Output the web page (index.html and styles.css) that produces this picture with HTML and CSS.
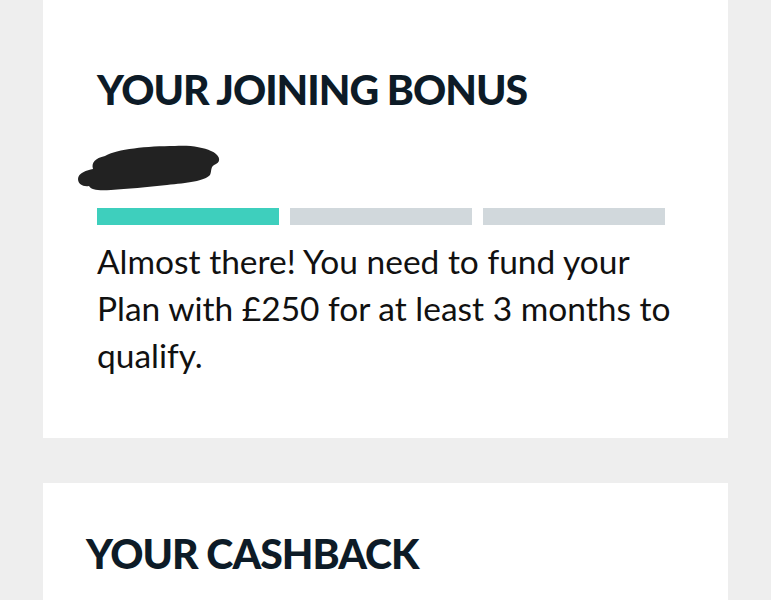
FILE: index.html
```html
<!DOCTYPE html>
<html lang="en">
<head>
<meta charset="utf-8">
<link rel="stylesheet" href="styles.css">
</head>
<body>
<main class="page">
  <section class="card card-bonus">
    <h2 class="card-title">YOUR JOINING BONUS</h2>
    <div class="redacted">
      <svg width="146" height="48" viewBox="0 0 146 48" aria-hidden="true">
        <path d="M28 12 C40 5 70 2 98 2 C112 1 126 3 134 7 C142 10 145 17 139 20 C133 22 135 27 133 31 C128 37 110 39 90 41 C70 43 50 45 34 46 C22 47 14 46 12 42 C6 43 1 40 1 35 C1 29 10 26 16 25 C14 19 18 14 28 12 Z" fill="#222222"/>
      </svg>
    </div>
    <div class="progress">
      <span class="seg seg-done"></span>
      <span class="seg"></span>
      <span class="seg"></span>
    </div>
    <p class="card-text">Almost there! You need to fund your Plan with £250 for at least 3 months to qualify.</p>
  </section>
  <section class="card card-cashback">
    <h2 class="card-title">YOUR CASHBACK</h2>
  </section>
</main>
</body>
</html>
```

FILE: styles.css
```css
html, body {
  margin: 0;
  padding: 0;
  background: #eeeeee;
}

.page {
  padding: 0 43px;
  display: flex;
  flex-direction: column;
  gap: 45px;
}

.card {
  background: #ffffff;
}

.card-bonus {
  height: 438px;
  box-sizing: border-box;
  padding: 67px 54px 0;
}

.card-cashback {
  height: 117px;
  box-sizing: border-box;
  padding: 48px 43px 0;
}

.card-title {
  margin: 0;
  font-family: "Lato", "Liberation Sans", sans-serif;
  font-weight: 900;
  font-size: 41px;
  line-height: 46px;
  color: #0d1b27;
  letter-spacing: -1px;
}

.redacted {
  margin: 31px 0 0 -20px;
  height: 48px;
}

.redacted svg {
  display: block;
}

.progress {
  margin-top: 16px;
  display: flex;
  gap: 11px;
}

.seg {
  width: 182px;
  height: 17px;
  background: #d1d8dc;
}

.seg-done {
  background: #3ecfbd;
}

.card-text {
  margin: 13px 0 0;
  font-family: "Lato", "Liberation Sans", sans-serif;
  font-size: 33.5px;
  line-height: 47px;
  color: #111111;
  max-width: 595px;
}
```
